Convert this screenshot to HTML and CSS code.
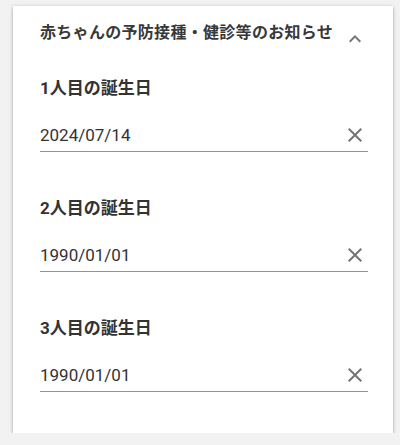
FILE: index.html
```html
<!DOCTYPE html>
<html lang="ja">
<head>
    <meta charset="UTF-8">
    <meta name="viewport" content="width=device-width, initial-scale=1.0">
    <title>赤ちゃんの予防接種・健診等のお知らせ</title>
    <link rel="stylesheet" href="styles.css">
</head>
<body>
    <div class="card">
        <div class="card-header">
            <h2 class="card-title">赤ちゃんの予防接種・健診等のお知らせ</h2>
            <svg class="icon expand-icon" viewBox="0 0 24 24" width="24" height="24">
                <path d="M12 8l-6 6 1.41 1.41L12 10.83l4.59 4.58L18 14z"/>
            </svg>
        </div>

        <div class="fields">
            <div class="field">
                <label class="field-label" for="birthday1">1人目の誕生日</label>
                <div class="field-input">
                    <input type="text" id="birthday1" value="2024/07/14">
                    <button type="button" class="clear-btn" aria-label="クリア">
                        <svg class="icon" viewBox="0 0 24 24" width="24" height="24">
                            <path d="M19 6.41L17.59 5 12 10.59 6.41 5 5 6.41 10.59 12 5 17.59 6.41 19 12 13.41 17.59 19 19 17.59 13.41 12z"/>
                        </svg>
                    </button>
                </div>
            </div>

            <div class="field">
                <label class="field-label" for="birthday2">2人目の誕生日</label>
                <div class="field-input">
                    <input type="text" id="birthday2" value="1990/01/01">
                    <button type="button" class="clear-btn" aria-label="クリア">
                        <svg class="icon" viewBox="0 0 24 24" width="24" height="24">
                            <path d="M19 6.41L17.59 5 12 10.59 6.41 5 5 6.41 10.59 12 5 17.59 6.41 19 12 13.41 17.59 19 19 17.59 13.41 12z"/>
                        </svg>
                    </button>
                </div>
            </div>

            <div class="field">
                <label class="field-label" for="birthday3">3人目の誕生日</label>
                <div class="field-input">
                    <input type="text" id="birthday3" value="1990/01/01">
                    <button type="button" class="clear-btn" aria-label="クリア">
                        <svg class="icon" viewBox="0 0 24 24" width="24" height="24">
                            <path d="M19 6.41L17.59 5 12 10.59 6.41 5 5 6.41 10.59 12 5 17.59 6.41 19 12 13.41 17.59 19 19 17.59 13.41 12z"/>
                        </svg>
                    </button>
                </div>
            </div>
        </div>
    </div>
</body>
</html>
```

FILE: styles.css
```css
* {
    margin: 0;
    padding: 0;
    box-sizing: border-box;
}

body {
    font-family: Roboto, "Noto Sans CJK JP", sans-serif;
    background-color: #f2f2f3;
    color: #333;
    padding: 6px 7px 0 13px;
}

.card {
    background: #fff;
    height: 427px;
    box-shadow: 0 2px 2px -1px rgba(0, 0, 0, 0.3),
                0 1px 3px 0 rgba(0, 0, 0, 0.2),
                0 1px 5px 0 rgba(0, 0, 0, 0.12);
}

.card-header {
    display: flex;
    align-items: flex-start;
    justify-content: space-between;
    padding: 13px 26px 0 27px;
}

.card-title {
    font-family: "Noto Sans CJK JP", sans-serif;
    font-size: 16px;
    font-weight: 700;
    line-height: 24px;
    letter-spacing: 0.3px;
    color: #383838;
}

.icon {
    display: block;
    fill: #757575;
}

.expand-icon {
    margin-top: 8px;
}

.fields {
    padding: 25px 25px 0 27px;
}

.field + .field {
    margin-top: 44px;
}

.field-label {
    display: block;
    font-family: Roboto, "Noto Sans CJK JP", sans-serif;
    font-size: 17px;
    font-weight: 700;
    line-height: 24px;
    color: #333;
}

.field-input {
    display: flex;
    align-items: center;
    height: 33px;
    margin-top: 19px;
    border-bottom: 1px solid #949494;
}

.field-input input {
    flex: 1;
    min-width: 0;
    border: none;
    outline: none;
    background: transparent;
    font-family: Roboto, sans-serif;
    font-size: 17px;
    color: #333;
    height: 32px;
}

.clear-btn {
    background: none;
    border: none;
    margin-right: 1px;
    cursor: pointer;
}
```
